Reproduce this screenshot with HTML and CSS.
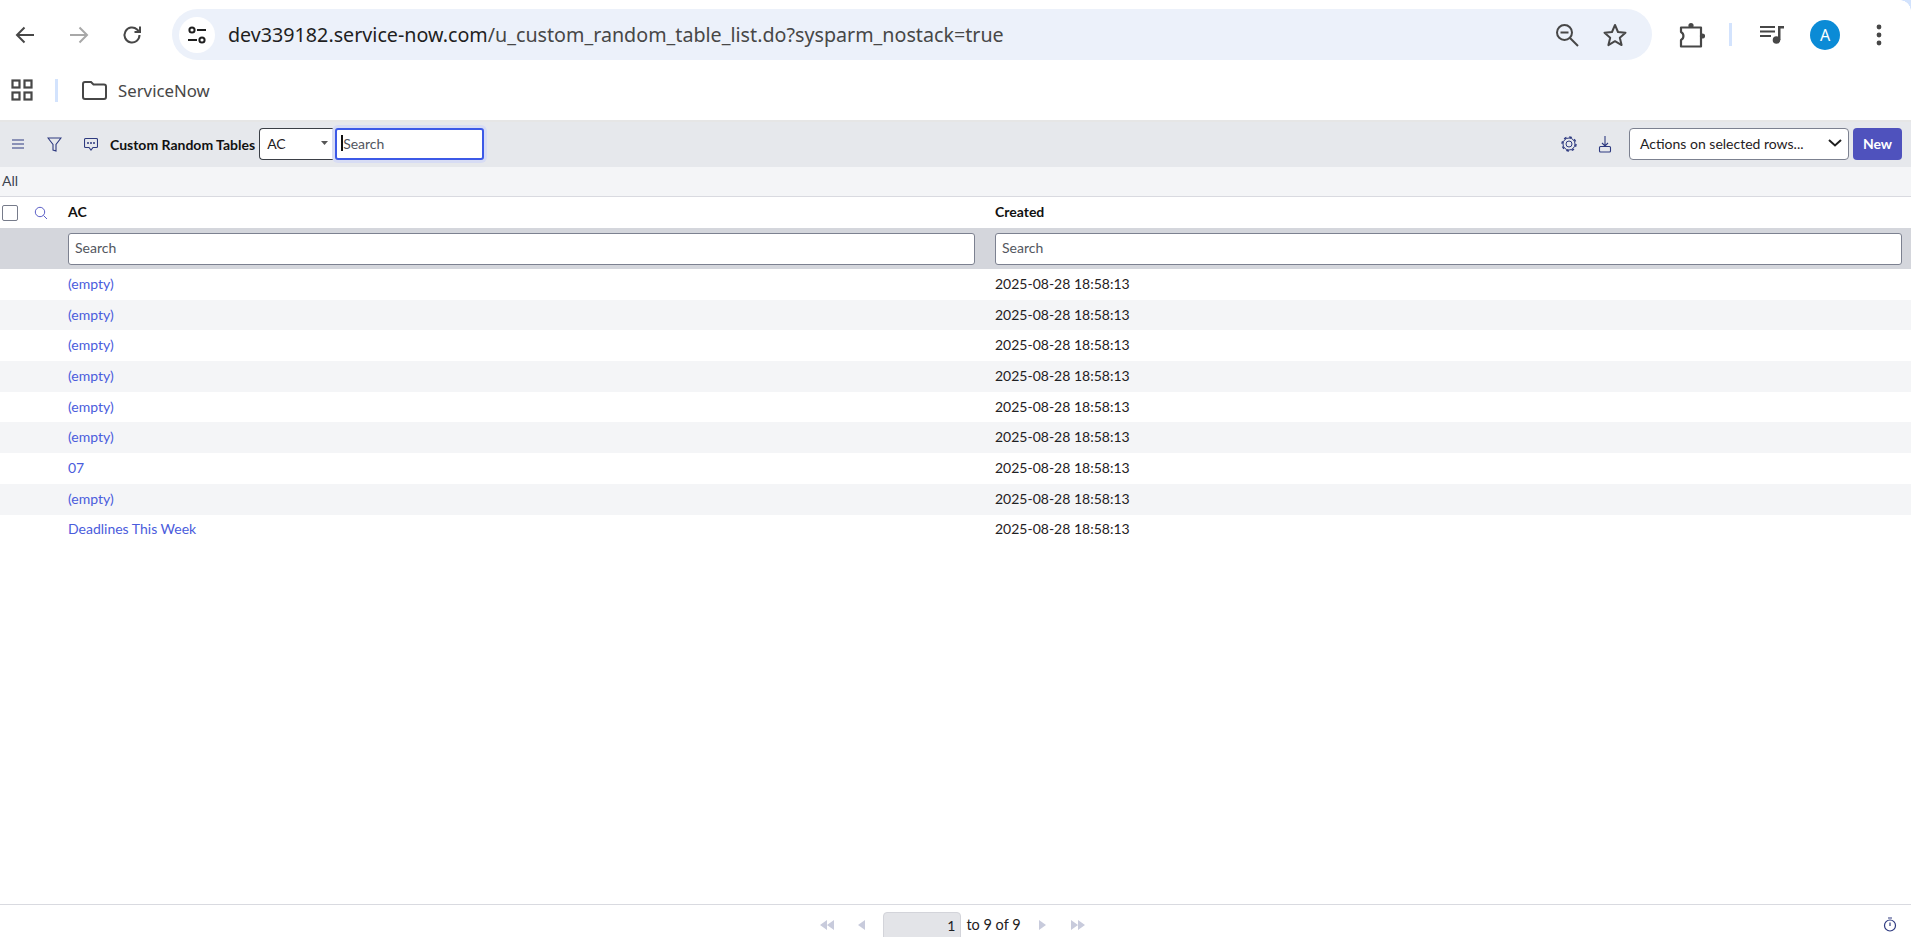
FILE: index.html
```html
<!DOCTYPE html>
<html lang="en">
<head>
  <meta charset="UTF-8" />
  <title>Custom Random Tables</title>
  <link rel="stylesheet" href="styles.css">
</head>
<body>
  <!-- browser toolbar -->
  <header class="browser-bar">
    <button class="nav-btn back">
      <svg width="24" height="24" viewBox="0 0 24 24" fill="none" stroke="#474747" stroke-width="2"><path d="M21 12H4M11.5 4.5L4 12l7.500 7.500"/></svg>
    </button>
    <button class="nav-btn forward">
      <svg width="24" height="24" viewBox="0 0 24 24" fill="none" stroke="#a8a8a8" stroke-width="2"><path d="M3 12h17M12.5 4.500L20 12l-7.500 7.500"/></svg>
    </button>
    <button class="nav-btn reload">
      <svg width="24" height="24" viewBox="0 0 24 24" fill="none" stroke="#474747" stroke-width="2"><path d="M19.5 12a7.500 7.500 0 1 1-2.400-5.500L19.500 9"/><path d="M20 3.500V9h-5.500" /></svg>
    </button>
    <div class="omnibox">
      <span class="site-info">
        <svg width="22" height="22" viewBox="0 0 22 22" fill="none" stroke="#1f1f1f" stroke-width="2"><circle cx="6" cy="6" r="2.600"/><path d="M11 6h9M2 16h9"/><circle cx="16" cy="16" r="2.600"/></svg>
      </span>
      <span class="url">dev339182.service-now.com<span class="url-path">/u_custom_random_table_list.do?sysparm_nostack=true</span></span>
      <button class="omni-btn zoom-btn">
        <svg width="26" height="26" viewBox="0 0 26 26" fill="none" stroke="#474747" stroke-width="2"><circle cx="10.500" cy="10.500" r="7.500"/><path d="M6.500 10.500h8M16 16l8 8"/></svg>
      </button>
      <button class="omni-btn star-btn">
        <svg width="26" height="26" viewBox="0 0 26 26" fill="none" stroke="#474747" stroke-width="2" stroke-linejoin="round"><path d="M13 3l3 7 7.500.7-5.700 5 1.800 7.400L13 19.200 6.400 23.100l1.800-7.400-5.700-5L10 10z"/></svg>
      </button>
    </div>
    <button class="nav-btn puzzle">
      <svg width="28" height="26" viewBox="0 0 28 26" fill="none" stroke="#474747" stroke-width="2.200" stroke-linejoin="round"><path d="M4 5.500H24V24.500H4V18a4.500 4.500 0 0 0 0-8z"/><circle cx="14" cy="3.500" r="2.600" fill="#474747" stroke="none"/><circle cx="25.500" cy="14" r="2.600" fill="#474747" stroke="none"/></svg>
    </button>
    <span class="bar-divider"></span>
    <button class="nav-btn queue">
      <svg width="26" height="26" viewBox="0 0 26 26" fill="#474747"><rect x="2" y="4" width="15" height="2"/><rect x="2" y="8.500" width="15" height="2"/><rect x="2" y="13" width="11" height="2"/><circle cx="18.500" cy="18" r="3.800"/><path d="M20 4h6v2.500h-3.500V18H20z"/></svg>
    </button>
    <span class="avatar">A</span>
    <button class="nav-btn dots">
      <svg width="6" height="22" viewBox="0 0 6 22" fill="#474747"><circle cx="3" cy="3" r="2.400"/><circle cx="3" cy="11" r="2.400"/><circle cx="3" cy="19" r="2.400"/></svg>
    </button>
  </header>
  <span class="window-corner"></span>

  <!-- bookmarks bar -->
  <div class="bookmarks">
    <svg class="apps-icon" width="22" height="22" viewBox="0 0 22 22" fill="none" stroke="#474747" stroke-width="2.200"><rect x="1.500" y="1.500" width="7" height="7"/><rect x="13.500" y="1.500" width="7" height="7"/><rect x="1.500" y="13.500" width="7" height="7"/><rect x="13.500" y="13.500" width="7" height="7"/></svg>
    <span class="book-divider"></span>
    <svg class="folder-icon" width="25" height="19" viewBox="0 0 25 19" fill="none" stroke="#474747" stroke-width="2"><path d="M1 3a2 2 0 0 1 2-2h6l2.500 2.500H22a2 2 0 0 1 2 2V16a2 2 0 0 1-2 2H3a2 2 0 0 1-2-2z"/></svg>
    <span class="book-name">ServiceNow</span>
  </div>

  <!-- list title bar -->
  <div class="list-header">
    <svg class="lh-icon hamburger" width="14" height="10" viewBox="0 0 14 10" fill="none" stroke="#2e3a80" stroke-width="1.200"><path d="M1 1h12M1 5h12M1 9h12"/></svg>
    <svg class="lh-icon filter" width="15" height="15" viewBox="0 0 15 15" fill="none" stroke="#2e3a80" stroke-width="1.100"><path d="M1 1h13L9 7.500V14L6 13V7.500z"/></svg>
    <svg class="lh-icon comment" width="14" height="14" viewBox="0 0 14 14" fill="none" stroke="#2e3a80" stroke-width="1.100"><path d="M1.500 1.500h11a1 1 0 0 1 1 1v7a1 1 0 0 1-1 1H9L7 13l-2-2.500H1.500a1 1 0 0 1-1-1v-7a1 1 0 0 1 1-1z"/><g fill="#2e3a80" stroke="none"><circle cx="4" cy="6" r="1"/><circle cx="7" cy="6" r="1"/><circle cx="10" cy="6" r="1"/></g></svg>
    <span class="list-title">Custom Random Tables</span>
    <div class="field-select">
      <span>AC</span>
      <svg width="7" height="4" viewBox="0 0 7 4" fill="#555"><path d="M0 0h7L3.500 4z"/></svg>
    </div>
    <div class="focus-search">
      <input class="focus-input" placeholder="Search">
      <span class="caret"></span>
    </div>
    <svg class="lh-icon gear" width="16" height="16" viewBox="0 0 16 16" fill="none" stroke="#2e3a80"><circle cx="8" cy="8" r="6" stroke-width="1"/><circle cx="8" cy="8" r="7" stroke-width="1.400" stroke-dasharray="2.700 2.800"/><circle cx="8" cy="8" r="3" stroke-width="1"/></svg>
    <svg class="lh-icon download" width="14" height="17" viewBox="0 0 14 17" fill="none" stroke="#2e3a80" stroke-width="1.100"><path d="M7 0v10M4 7l3 3 3-3"/><rect x="1.500" y="10.500" width="11" height="5.500" rx="1"/></svg>
    <div class="action-select">
      <span>Actions on selected rows...</span>
      <svg width="14" height="8" viewBox="0 0 14 8" fill="none" stroke="#1f1f1f" stroke-width="2"><path d="M1 1l6 5.500L13 1"/></svg>
    </div>
    <button class="new-btn">New</button>
  </div>

  <div class="breadcrumb">All</div>

  <div class="grid-row col-head">
    <div class="select-cell">
      <span class="checkbox"></span>
      <svg width="14" height="14" viewBox="0 0 14 14" fill="none" stroke="#5b5fc7" stroke-width="1"><circle cx="6" cy="6" r="4.700"/><path d="M9.500 9.500L13 13"/></svg>
    </div>
    <div>AC</div>
    <div>Created</div>
  </div>

  <div class="grid-row filter-row">
    <div></div>
    <div><input class="col-search" placeholder="Search"></div>
    <div><input class="col-search" placeholder="Search"></div>
  </div>

  <div class="rows">
    <div class="grid-row data-row"><div></div><div><a href="#">(empty)</a></div><div>2025-08-28 18:58:13</div></div>
    <div class="grid-row data-row"><div></div><div><a href="#">(empty)</a></div><div>2025-08-28 18:58:13</div></div>
    <div class="grid-row data-row"><div></div><div><a href="#">(empty)</a></div><div>2025-08-28 18:58:13</div></div>
    <div class="grid-row data-row"><div></div><div><a href="#">(empty)</a></div><div>2025-08-28 18:58:13</div></div>
    <div class="grid-row data-row"><div></div><div><a href="#">(empty)</a></div><div>2025-08-28 18:58:13</div></div>
    <div class="grid-row data-row"><div></div><div><a href="#">(empty)</a></div><div>2025-08-28 18:58:13</div></div>
    <div class="grid-row data-row"><div></div><div><a href="#">07</a></div><div>2025-08-28 18:58:13</div></div>
    <div class="grid-row data-row"><div></div><div><a href="#">(empty)</a></div><div>2025-08-28 18:58:13</div></div>
    <div class="grid-row data-row"><div></div><div><a href="#">Deadlines This Week</a></div><div>2025-08-28 18:58:13</div></div>
  </div>

  <footer class="pager">
    <div class="pager-main">
      <svg class="pg-icon" width="14" height="10" viewBox="0 0 14 10" fill="#c8cbdc"><path d="M7 0v10L0 5zM14 0v10L7 5z"/></svg>
      <svg class="pg-icon pg-prev" width="7" height="10" viewBox="0 0 7 10" fill="#c8cbdc"><path d="M7 0v10L0 5z"/></svg>
      <input class="page-input" value="1" readonly>
      <span class="page-text">to 9 of 9</span>
      <svg class="pg-icon pg-next" width="7" height="10" viewBox="0 0 7 10" fill="#c8cbdc"><path d="M0 0v10l7-5z"/></svg>
      <svg class="pg-icon pg-last" width="14" height="10" viewBox="0 0 14 10" fill="#c8cbdc"><path d="M0 0v10l7-5zM7 0v10l7-5z"/></svg>
    </div>
    <svg class="timer" width="14" height="15" viewBox="0 0 14 15" fill="none" stroke="#2e3a80" stroke-width="1.200"><circle cx="7" cy="8.500" r="5.500"/><path d="M5 1h4M7 5.500v3.500"/></svg>
  </footer>
</body>
</html>
```

FILE: styles.css
```css
html, body {
  margin: 0; padding: 0; height: 100%;
  overflow: hidden;
  background: #fff;
}
body {
  display: flex; flex-direction: column;
  font-family: Lato, 'Liberation Sans', sans-serif;
  font-size: 14px;
  color: #1f2123;
  position: relative;
}
button {
  border: none; background: none; padding: 0; margin: 0;
  display: flex; align-items: center; justify-content: center;
}
/* browser toolbar */
.browser-bar {
  height: 69px;
  flex: none;
  display: flex;
  align-items: center;
}
.nav-btn { width: 40px; height: 40px; flex: none; }
.back { margin-left: 5px; }
.forward { margin-left: 14px; }
.reload { margin-left: 13px; }
.omnibox {
  margin-left: 20px;
  width: 1480px;
  height: 51px;
  background: #ecf1fa;
  border-radius: 26px;
  display: flex;
  align-items: center;
  flex: none;
}
.site-info {
  margin-left: 7px;
  width: 36px; height: 36px;
  border-radius: 50%;
  background: #fff;
  display: flex; align-items: center; justify-content: center;
}
.url {
  margin-left: 13px;
  flex: 1;
  font-family: 'Noto Sans', sans-serif;
  font-size: 19.7px;
  color: #1f1f1f;
  white-space: nowrap;
}
.url-path { color: #474747; }
.omni-btn { width: 32px; height: 32px; }
.zoom-btn { margin-right: 16px; }
.star-btn { margin-right: 21px; }
.puzzle { margin-left: 19px; }
.bar-divider {
  margin-left: 18px;
  width: 3px; height: 23px;
  background: #d3e3fd;
}
.queue { margin-left: 19px; }
.avatar {
  margin-left: 19px;
  width: 30px; height: 30px;
  border-radius: 50%;
  background: #0b8bd6;
  color: #fff;
  font-family: 'Noto Sans', sans-serif;
  font-size: 16px;
  display: flex; align-items: center; justify-content: center;
}
.dots { margin-left: 19px; }
.window-corner {
  position: absolute; top: 0; right: 0;
  width: 11px; height: 11px;
  background: radial-gradient(circle at 0 100%, #fff 10.5px, #d3e3fd 11px);
}
/* bookmarks */
.bookmarks {
  height: 42px;
  padding-bottom: 9px;
  flex: none;
  display: flex;
  align-items: center;
  border-bottom: 2px solid #e6e6e6;
}
.apps-icon { margin-left: 11px; }
.book-divider {
  margin-left: 22px;
  width: 3px; height: 23px;
  background: #d3e3fd;
}
.folder-icon { margin-left: 24px; }
.book-name {
  margin-left: 11px;
  font-family: 'Noto Sans', sans-serif;
  font-size: 16.8px;
  color: #474747;
}
/* list header */
.list-header {
  height: 44px;
  padding-bottom: 1px;
  flex: none;
  background: #e6e8ec;
  display: flex;
  align-items: center;
}
.hamburger { margin-left: 11px; }
.filter { margin-left: 22px; }
.comment { margin-left: 22px; }
.list-title {
  margin-left: 12px;
  font-weight: 700;
  color: #111;
  white-space: nowrap;
}
.field-select {
  margin-left: 4px;
  width: 76px; height: 32px;
  box-sizing: border-box;
  background: #fff;
  border: 1px solid #3b3f46;
  border-right: none;
  border-radius: 4px 0 0 4px;
  padding: 0 7px 2px 7px;
  display: flex; align-items: center; justify-content: space-between;
  font-size: 14px;
}
.focus-search { position: relative; flex: none; }
.focus-input {
  display: block;
  width: 149px; height: 32px;
  box-sizing: border-box;
  border: 2px solid #3c59e7;
  border-radius: 3px;
  box-shadow: 0 0 0 3px #d7dcf4;
  padding: 0 6px 2px;
  font: 14px Lato, sans-serif;
  outline: none;
}
.focus-input::placeholder, .col-search::placeholder { color: #52565e; opacity: 1; }
.caret {
  position: absolute; left: 6px; top: 7px;
  width: 2px; height: 16px;
  background: #111;
}
.gear { margin-left: auto; }
.download { margin-left: 21px; }
.action-select {
  margin-left: 17px;
  width: 220px; height: 32px;
  box-sizing: border-box;
  background: #fff;
  border: 1px solid #7c8190;
  border-radius: 4px;
  padding: 0 6px 2px 10px;
  display: flex; align-items: center; justify-content: space-between;
}
.new-btn {
  margin-left: 4px; margin-right: 9px;
  width: 49px; height: 32px;
  padding-bottom: 2px;
  background: #4f52bd;
  color: #fff;
  border-radius: 4px;
  font: 700 14px Lato, sans-serif;
}
.breadcrumb {
  height: 27px;
  padding: 0 0 2px 2px;
  flex: none;
  background: #f4f5f7;
  border-bottom: 1px solid #d9dae0;
  display: flex; align-items: center;
  color: #3d4450;
}
/* list grid */
.grid-row {
  display: grid;
  grid-template-columns: 68px 927px 1fr;
  flex: none;
  align-items: center;
}
.col-head {
  height: 31px;
  font-weight: 700;
  color: #111;
}
.col-head > div:not(.select-cell) { padding-bottom: 2px; }
.select-cell {
  display: flex; align-items: center;
  padding-left: 2px;
}
.checkbox {
  width: 14px; height: 14px;
  border: 1px solid #767b8a;
  border-radius: 2px;
  background: #fff;
}
.select-cell svg { margin-left: 16px; }
.filter-row { height: 41px; background: #d4d6dc; }
.col-search {
  display: block;
  width: 907px; height: 32px;
  box-sizing: border-box;
  background: #fff;
  border: 1px solid #7c8190;
  border-radius: 3px;
  padding: 0 6px 2px;
  font: 14px Lato, sans-serif;
}
.data-row { height: 30.7px; color: #1f2123; }
.data-row > div { padding-bottom: 2px; }
.data-row:nth-child(even) { background: #f4f5f7; }
.data-row a { color: #4a5cdc; text-decoration: none; }
/* pager */
.pager {
  margin-top: auto;
  height: 32px;
  flex: none;
  border-top: 1px solid #d9dae0;
  display: grid;
  grid-template-columns: 1fr auto 1fr;
}
.pager-main {
  grid-column: 2;
  display: flex;
  align-items: center;
  padding-right: 6px;
}
.pg-prev { margin-left: 24px; }
.page-input {
  margin-left: 18px;
  margin-top: 7px;
  align-self: flex-start;
  width: 78px; height: 32px;
  box-sizing: border-box;
  background: #e3e4e8;
  border: 1px solid #d3d4da;
  border-radius: 4px 4px 0 0;
  text-align: right;
  padding: 0 5px 6px 0;
  font: 14px Lato, sans-serif;
  color: #1f2123;
}
.page-text { margin-left: 5px; font-size: 14.5px; }
.pg-next { margin-left: 18px; }
.pg-last { margin-left: 25px; }
.timer { grid-column: 3; justify-self: end; align-self: center; margin-right: 14px; }
```
